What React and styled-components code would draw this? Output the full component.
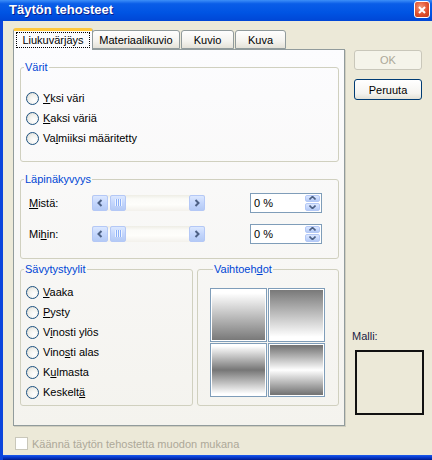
import React from "react"
import styled, { createGlobalStyle } from "styled-components"

const GlobalStyle = createGlobalStyle`
  html, body {
    margin: 0;
    padding: 0;
  }
  body {
    width: 432px;
    height: 460px;
    overflow: hidden;
    background: #ece9d8;
    font-family: "Liberation Sans", Arial, sans-serif;
    font-size: 11px;
    color: #000;
  }
`

const Window = styled.div`
  width: 432px;
  height: 460px;
  display: flex;
  flex-direction: column;
`

const TitleBar = styled.div`
  height: 21px;
  flex: none;
  display: flex;
  align-items: flex-start;
  justify-content: space-between;
  background: linear-gradient(180deg, #3d8ff8 0%, #0a5de8 18%, #0054e3 60%, #0046d6 100%);
`

const Title = styled.span`
  color: #fff;
  font-weight: bold;
  font-size: 13px;
  line-height: 20px;
  padding-left: 9px;
  text-shadow: 1px 1px 0 #0a1f8c;
`

const CloseButton = styled.div`
  width: 14px;
  height: 15px;
  margin: 1px 2px 0 0;
  border: 1px solid #fff;
  border-radius: 3px;
  background: radial-gradient(circle at 40% 35%, #f39a7c 0%, #e0512f 55%, #c23a18 100%);
  display: flex;
  align-items: center;
  justify-content: center;
`

const Frame = styled.div`
  flex: 1;
  display: flex;
  flex-direction: column;
  border-left: 3px solid #0b45dc;
`

const Body = styled.div`
  flex: 1;
  display: flex;
  padding: 7px 0 0 10px;
  background: #ece9d8;
`

const BottomEdge = styled.div`
  height: 5px;
  flex: none;
  background: linear-gradient(180deg, #1c5cf0 0%, #0637c8 50%, #001c8a 100%);
`

const LeftColumn = styled.div`
  width: 332px;
  display: flex;
  flex-direction: column;
`

const TabRow = styled.div`
  height: 21px;
  display: flex;
  align-items: flex-end;
`

const Tab = styled.div`
  box-sizing: border-box;
  width: ${(p) => p.$w}px;
  margin-left: ${(p) => p.$ml || 0}px;
  height: ${(p) => (p.$active ? 22 : 19)}px;
  margin-bottom: ${(p) => (p.$active ? -1 : 0)}px;
  position: relative;
  z-index: ${(p) => (p.$active ? 2 : 1)};
  border: 1px solid #919b9c;
  border-bottom: ${(p) => (p.$active ? "none" : "1px solid #919b9c")};
  border-top: ${(p) => (p.$active ? "3px solid #ffc83c" : "1px solid #919b9c")};
  border-radius: 3px 3px 0 0;
  background: ${(p) =>
    p.$active ? "#fcfcfe" : "linear-gradient(180deg, #fefefe 0%, #f4f3ee 60%, #e4e2d8 100%)"};
  display: flex;
  align-items: center;
  justify-content: center;
  padding: ${(p) => (p.$active ? "1px 2px 2px" : "0")};
`

const FocusRect = styled.span`
  flex: 1;
  align-self: stretch;
  border: 1px dotted #000;
  display: flex;
  align-items: center;
  justify-content: center;
`

const Panel = styled.div`
  box-sizing: border-box;
  height: 377px;
  border: 1px solid #919b9c;
  box-shadow: 1px 1px 0 #d0cebf;
  background: linear-gradient(180deg, #fcfcfe 0%, #f4f3ee 100%);
  padding: 11px 5px 0 6px;
  display: flex;
  flex-direction: column;
`

const Group = styled.fieldset`
  box-sizing: border-box;
  margin: ${(p) => p.$mt || 0}px 0 0 0;
  padding: ${(p) => p.$pt || 0}px 0 ${(p) => p.$pb || 0}px ${(p) => p.$pl || 0}px;
  width: ${(p) => (p.$w ? p.$w + "px" : "auto")};
  flex: ${(p) => (p.$grow ? "1 1 auto" : "none")};
  min-width: 0;
  border: 1px solid #d0d0bf;
  border-radius: 3px;
`

const Legend = styled.legend`
  color: #0046d5;
  padding: 0 1px;
  margin-left: 3px;
  line-height: 13px;
`

const GroupRow = styled.div`
  display: flex;
  gap: 4px;
  margin-top: 4px;
`

const RadioRow = styled.div`
  height: 20px;
  display: flex;
  align-items: center;
  gap: 4px;
  padding-left: 5px;
`

const Radio = styled.span`
  box-sizing: border-box;
  width: 13px;
  height: 13px;
  flex: none;
  border-radius: 50%;
  border: 1px solid #1c5180;
  background: radial-gradient(circle at 65% 65%, #ffffff 0%, #f3f3ef 45%, #d6d5cc 100%);
`

const Key = styled.u`
  text-decoration: underline;
  text-underline-offset: 1px;
`

const SliderRow = styled.div`
  height: 21px;
  display: flex;
  align-items: center;
  padding-left: 8px;
  margin-top: ${(p) => p.$mt || 0}px;
`

const SliderLabel = styled.span`
  width: 63px;
  flex: none;
`

const ScrollBar = styled.div`
  width: 113px;
  height: 16px;
  flex: none;
  display: flex;
  align-items: stretch;
  background: linear-gradient(180deg, #eeede5 0%, #fbfbf8 25%, #fefefb 60%, #f3f1ec 100%);
`

const ScrollButton = styled.div`
  box-sizing: border-box;
  width: 16px;
  flex: none;
  margin-left: ${(p) => p.$ml || 0}px;
  border: 1px solid #b4c8f6;
  border-radius: 2px;
  background: linear-gradient(180deg, #dce8ff 0%, #c4d6fc 50%, #b4caf5 100%);
  display: flex;
  align-items: center;
  justify-content: center;
`

const Spacer = styled.div`
  flex: 1;
`

const SpinBox = styled.div`
  box-sizing: border-box;
  width: 72px;
  height: 20px;
  margin-left: 45px;
  border: 1px solid #7f9db9;
  background: #fff;
  display: flex;
  align-items: center;
  padding: 1px;
`

const SpinText = styled.span`
  flex: 1;
  padding-left: 2px;
`

const SpinButtons = styled.div`
  width: 15px;
  align-self: stretch;
  display: flex;
  flex-direction: column;
  gap: 1px;
`

const SpinHalf = styled.div`
  flex: 1;
  border: 1px solid #b4c8f6;
  border-radius: 2px;
  background: linear-gradient(180deg, #dce8ff 0%, #c4d6fc 60%, #b4caf5 100%);
  display: flex;
  align-items: center;
  justify-content: center;
`

const SwatchGrid = styled.div`
  display: grid;
  grid-template-columns: 57px 57px;
  grid-template-rows: 54px 54px;
  gap: 1px;
`

const Swatch = styled.div`
  border: 1px solid #7f9db9;
  box-shadow: inset 0 0 0 1px #fff;
  background: ${(p) => p.$bg};
`

const RightColumn = styled.div`
  width: 68px;
  margin-left: 9px;
  display: flex;
  flex-direction: column;
`

const Button = styled.div`
  box-sizing: border-box;
  height: ${(p) => p.$h || 20}px;
  margin-top: ${(p) => p.$mt || 0}px;
  border: 1px solid ${(p) => (p.$disabled ? "#c9c7ba" : "#003c74")};
  border-radius: 3px;
  background: ${(p) =>
    p.$disabled ? "#f5f4ea" : "linear-gradient(180deg, #ffffff 0%, #f5f4f0 70%, #e3e1d6 100%)"};
  color: ${(p) => (p.$disabled ? "#aca899" : "#000")};
  display: flex;
  align-items: center;
  justify-content: center;
`

const PreviewLabel = styled.span`
  margin: 230px 0 0 -2px;
  line-height: 13px;
  color: #1a2244;
`

const PreviewBox = styled.div`
  box-sizing: border-box;
  width: 69px;
  height: 65px;
  margin: 7px 0 0 1px;
  border: 2px solid #111;
`

const CheckRow = styled.div`
  display: flex;
  align-items: center;
  gap: 4px;
  margin: 11px 0 0 2px;
  color: #aca899;
`

const CheckBox = styled.span`
  box-sizing: border-box;
  width: 13px;
  height: 13px;
  border: 1px solid #c9c7ba;
  background: #fff;
`

const Chevron = ({ dir }) => (
  <svg width="8" height="8" viewBox="0 0 8 8">
    <path
      d={dir === "left" ? "M5.5 1 L2.5 4 L5.5 7" : "M2.5 1 L5.5 4 L2.5 7"}
      fill="none"
      stroke="#4d6185"
      strokeWidth="2"
    />
  </svg>
)

const Grip = () => (
  <svg width="7" height="7" viewBox="0 0 7 7">
    {[0, 2, 4, 6].map((x) => (
      <line key={x} x1={x + 0.5} y1="0" x2={x + 0.5} y2="7" stroke="#eef4fe" strokeWidth="1" />
    ))}
    {[1, 3, 5].map((x) => (
      <line key={x} x1={x + 0.5} y1="0" x2={x + 0.5} y2="7" stroke="#8cb0f8" strokeWidth="1" />
    ))}
  </svg>
)

const SpinArrow = ({ up }) => (
  <svg width="7" height="4" viewBox="0 0 7 4">
    <path d={up ? "M0.5 3.5 L3.5 0.5 L6.5 3.5" : "M0.5 0.5 L3.5 3.5 L6.5 0.5"} fill="none" stroke="#4d6185" strokeWidth="1.6" />
  </svg>
)

const Slider = ({ label, value, mt }) => (
  <SliderRow $mt={mt}>
    <SliderLabel>{label}</SliderLabel>
    <ScrollBar>
      <ScrollButton>
        <Chevron dir="left" />
      </ScrollButton>
      <ScrollButton $ml={2}>
        <Grip />
      </ScrollButton>
      <Spacer />
      <ScrollButton>
        <Chevron dir="right" />
      </ScrollButton>
    </ScrollBar>
    <SpinBox>
      <SpinText>{value}</SpinText>
      <SpinButtons>
        <SpinHalf>
          <SpinArrow up />
        </SpinHalf>
        <SpinHalf>
          <SpinArrow />
        </SpinHalf>
      </SpinButtons>
    </SpinBox>
  </SliderRow>
)

const RadioItem = ({ children }) => (
  <RadioRow>
    <Radio />
    <span>{children}</span>
  </RadioRow>
)

const gray = "#767676"
const swatches = [
  `linear-gradient(180deg, #fff 8%, ${gray} 100%)`,
  `linear-gradient(180deg, ${gray} 0%, #fff 92%)`,
  `linear-gradient(180deg, #fff 4%, ${gray} 50%, #fff 96%)`,
  `linear-gradient(180deg, ${gray} 4%, #fff 50%, ${gray} 96%)`,
]

export default function App() {
  return (
    <>
      <GlobalStyle />
      <Window>
        <TitleBar>
          <Title>Täytön tehosteet</Title>
          <CloseButton>
            <svg width="8" height="8" viewBox="0 0 8 8">
              <path d="M1 1 L7 7 M7 1 L1 7" stroke="#fff" strokeWidth="2" />
            </svg>
          </CloseButton>
        </TitleBar>
        <Frame>
          <Body>
            <LeftColumn>
              <TabRow>
                <Tab $active $w={80}>
                  <FocusRect>Liukuvärjäys</FocusRect>
                </Tab>
                <Tab $w={88} $ml={-1}>Materiaalikuvio</Tab>
                <Tab $w={53} $ml={1}>Kuvio</Tab>
                <Tab $w={51} $ml={1}>Kuva</Tab>
              </TabRow>
              <Panel>
                <Group $pt={14} $pb={13}>
                  <Legend>Värit</Legend>
                  <RadioItem>
                    <Key>Y</Key>ksi väri
                  </RadioItem>
                  <RadioItem>
                    <Key>K</Key>aksi väriä
                  </RadioItem>
                  <RadioItem>
                    Va<Key>l</Key>miiksi määritetty
                  </RadioItem>
                </Group>
                <Group $mt={11} $pt={6} $pb={14}>
                  <Legend>Läpinäkyvyys</Legend>
                  <Slider
                    label={
                      <>
                        <Key>M</Key>istä:
                      </>
                    }
                    value="0 %"
                  />
                  <Slider
                    mt={10}
                    label={
                      <>
                        Mi<Key>h</Key>in:
                      </>
                    }
                    value="0 %"
                  />
                </Group>
                <GroupRow>
                  <Group $w={173} $pt={6} $pb={3}>
                    <Legend>Sävytystyylit</Legend>
                    <RadioItem>
                      <Key>V</Key>aaka
                    </RadioItem>
                    <RadioItem>
                      <Key>P</Key>ysty
                    </RadioItem>
                    <RadioItem>
                      V<Key>i</Key>nosti ylös
                    </RadioItem>
                    <RadioItem>
                      Vino<Key>s</Key>ti alas
                    </RadioItem>
                    <RadioItem>
                      K<Key>u</Key>lmasta
                    </RadioItem>
                    <RadioItem>
                      Keskelt<Key>ä</Key>
                    </RadioItem>
                  </Group>
                  <Group $grow $pt={12} $pl={12} $pb={8}>
                    <Legend>
                      Vaihtoeh<Key>d</Key>ot
                    </Legend>
                    <SwatchGrid>
                      {swatches.map((bg, i) => (
                        <Swatch key={i} $bg={bg} />
                      ))}
                    </SwatchGrid>
                  </Group>
                </GroupRow>
              </Panel>
              <CheckRow>
                <CheckBox />
                <span>Käännä täytön tehostetta muodon mukana</span>
              </CheckRow>
            </LeftColumn>
            <RightColumn>
              <Button $disabled $mt={22}>
                OK
              </Button>
              <Button $mt={9} $h={21}>
                Peruuta
              </Button>
              <PreviewLabel>Malli:</PreviewLabel>
              <PreviewBox />
            </RightColumn>
          </Body>
          <BottomEdge />
        </Frame>
      </Window>
    </>
  )
}
